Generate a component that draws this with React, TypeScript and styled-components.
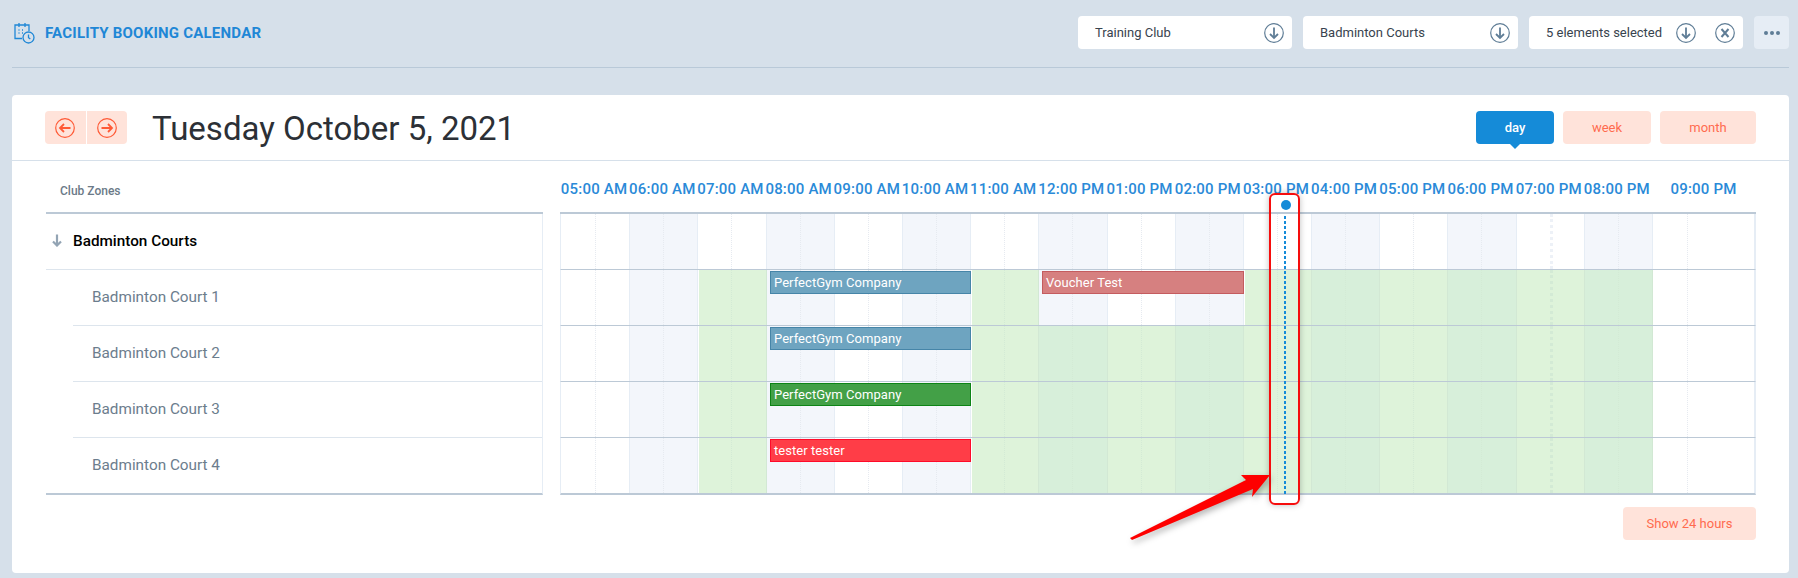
import React from "react";
import styled, { createGlobalStyle } from "styled-components";

const GlobalStyle = createGlobalStyle`
  html, body {
    margin: 0;
    padding: 0;
    background: #d6e0ea;
    font-family: Roboto, "Liberation Sans", sans-serif;
  }
  * { box-sizing: border-box; }
`;

const Page = styled.div`
  position: relative;
  width: 1798px;
  height: 578px;
  padding: 0 9px 0 12px;
  overflow: hidden;
`;

const TopHeader = styled.header`
  display: flex;
  align-items: center;
  height: 68px;
  padding: 0 0 2px 2px;
  border-bottom: 1px solid #b9c9d8;
`;

const Brand = styled.div`
  display: flex;
  align-items: center;
  gap: 10px;
  flex: 1;
  color: #1f87d6;
  font-size: 15px;
  font-weight: 700;
  letter-spacing: 0.22px;
`;

const Filters = styled.div`
  display: flex;
  gap: 11px;
`;

const Select = styled.div`
  display: flex;
  align-items: center;
  gap: 9px;
  width: ${(p: { $width: number }) => p.$width}px;
  height: 33px;
  padding: 0 8px 0 17px;
  background: #fff;
  border-radius: 4px;
  color: #38434e;
  font-size: 13px;
`;

const SelectLabel = styled.span`
  flex: 1;
  white-space: nowrap;
`;

const IconPair = styled.div`
  display: flex;
  gap: 19px;
`;

const MoreButton = styled.div`
  display: flex;
  align-items: center;
  justify-content: center;
  gap: 2px;
  width: 35px;
  height: 33px;
  background: #e6edf5;
  border-radius: 4px;
`;

const MoreDot = styled.span`
  width: 4px;
  height: 4px;
  border-radius: 50%;
  background: #5f7d96;
`;

const Card = styled.section`
  margin-top: 27px;
  height: 478px;
  background: #fff;
  border-radius: 4px;
`;

const CardTop = styled.div`
  display: flex;
  align-items: center;
  height: 66px;
  padding: 0 33px 0 33px;
  border-bottom: 1px solid #d6e0ea;
`;

const NavGroup = styled.div`
  display: flex;
  gap: 1px;
  border-radius: 4px;
  overflow: hidden;
`;

const NavButton = styled.div`
  display: flex;
  align-items: center;
  justify-content: center;
  width: 40.5px;
  height: 33px;
  background: #ffe3da;
`;

const DateTitle = styled.h1`
  flex: 1;
  margin: 0 0 0 25px;
  padding-top: 2px;
  color: #2c3036;
  font-size: 33px;
  font-weight: 400;
  white-space: nowrap;
`;

const ViewSwitch = styled.div`
  display: flex;
  gap: 9px;
`;

const ViewButton = styled.div<{ $active?: boolean; $width: number }>`
  position: relative;
  display: flex;
  align-items: center;
  justify-content: center;
  width: ${(p) => p.$width}px;
  height: 33px;
  border-radius: 4px;
  background: ${(p) => (p.$active ? "#158bd8" : "#ffe3da")};
  color: ${(p) => (p.$active ? "#fff" : "#ff6b4f")};
  font-size: 13px;
  font-weight: ${(p) => (p.$active ? 500 : 400)};

  ${(p) =>
    p.$active &&
    `&:after {
      content: "";
      position: absolute;
      left: 50%;
      bottom: -5px;
      margin-left: -5px;
      border-left: 5px solid transparent;
      border-right: 5px solid transparent;
      border-top: 5px solid #158bd8;
    }`}
`;

const CardBody = styled.div`
  display: flex;
  gap: 17px;
  padding: 0 33px 0 34px;
`;

const ZoneColumn = styled.div`
  width: 497px;
  flex: none;
`;

const ZoneHeader = styled.div`
  display: flex;
  align-items: center;
  height: 53px;
  padding: 9px 0 0 14px;
  border-bottom: 2px solid #bcc9d6;
  color: #6b7a88;
  font-size: 12px;
  font-weight: 500;
`;

const ZoneList = styled.div`
  border-right: 1px solid #e6edf5;
  border-bottom: 2px solid #bcc9d6;
`;

const GroupRow = styled.div`
  display: flex;
  align-items: center;
  height: 56px;
  padding: 0 0 2px 6px;
  gap: 11px;
  color: #000;
  font-size: 15.3px;
  font-weight: 500;
  border-bottom: 1px solid #dde5ed;
`;

const CourtRow = styled.div<{ $last?: boolean }>`
  display: flex;
  align-items: center;
  height: ${(p) => (p.$last ? 55 : 56)}px;
  margin-left: 27px;
  padding: 0 0 2px 19px;
  color: #6c7d8d;
  font-size: 15.3px;
  border-bottom: ${(p) => (p.$last ? "none" : "1px solid #dde5ed")};
`;

const Timeline = styled.div`
  position: relative;
  flex: 1;
`;

const HourGrid = styled.div`
  display: grid;
  grid-template-columns: repeat(16, 68.2px) 1fr;
`;

const HourHeader = styled(HourGrid)`
  height: 53px;
  border-bottom: 2px solid #bcc9d6;
`;

const HourLabel = styled.div`
  display: flex;
  justify-content: center;
  align-items: center;
  height: 51px;
  padding-top: 4px;
  color: #2a8ad8;
  font-size: 15px;
  font-weight: 500;
  letter-spacing: 0.2px;
  white-space: nowrap;
`;

const TimeRow = styled(HourGrid)<{ $height: number; $last?: boolean }>`
  position: relative;
  height: ${(p) => p.$height}px;
  padding-left: 1px;
  border-left: 1px solid #e6edf5;
  border-right: 1px solid #e6edf5;
  border-bottom: ${(p) => (p.$last ? "2px solid #bcc9d6" : "1px solid #bcc9d6")};
`;

const HourCell = styled.div<{ $tint: boolean; $green: boolean; $start?: boolean; $center: number; $wide?: boolean }>`
  position: relative;
  background: ${(p) =>
    p.$green ? (p.$tint ? "#d7efda" : "#def3da") : p.$tint ? "#f3f6fb" : "#fff"};
  border-right: 1px solid ${(p) => (p.$green ? "#d2e8d4" : "#e6edf5")};
  ${(p) => p.$start && "box-shadow: inset 1px 0 0 #fff;"}

  &:before {
    content: "";
    position: absolute;
    top: 0;
    bottom: 0;
    left: ${(p) => p.$center}px;
    border-left: ${(p) => (p.$wide ? 3 : 1)}px dotted
      ${(p) => (p.$green ? "#d3ead5" : p.$wide ? "#edf1f7" : "#e6eaf0")};
  }
`;

const Booking = styled.div<{ $left: number; $width: number; $bg: string; $line: string }>`
  position: absolute;
  top: 1px;
  left: ${(p) => p.$left}px;
  width: ${(p) => p.$width}px;
  height: 23px;
  padding-left: 3px;
  background: ${(p) => p.$bg};
  border: 1px solid ${(p) => p.$line};
  color: #fff;
  font-size: 13px;
  font-weight: 400;
  letter-spacing: 0.05px;
  line-height: 21px;
  z-index: 1;
`;

const NowDot = styled.div`
  position: absolute;
  top: 39px;
  left: 721px;
  width: 10px;
  height: 10px;
  border-radius: 50%;
  background: #158bd8;
  z-index: 2;
`;

const NowLine = styled.div`
  position: absolute;
  top: 55px;
  left: 724px;
  width: 2px;
  height: 278px;
  background: repeating-linear-gradient(#158bd8 0 3px, transparent 3px 5px);
  z-index: 2;
`;

const FooterRow = styled.div`
  display: flex;
  justify-content: flex-end;
  margin-top: 12px;
  padding: 0 33px;
`;

const ShowAllButton = styled.div`
  display: flex;
  align-items: center;
  justify-content: center;
  width: 133px;
  height: 33px;
  border-radius: 4px;
  background: #ffe3da;
  color: #ff6b4f;
  font-size: 13px;
`;

const Highlight = styled.div`
  position: absolute;
  left: 1269px;
  top: 193px;
  width: 31px;
  height: 312px;
  border: 2px solid #f60d0d;
  border-radius: 6px;
  box-shadow: 0 0 6px rgba(0, 0, 0, 0.25);
  z-index: 3;
`;

const ArrowOverlay = styled.svg`
  position: absolute;
  left: 1120px;
  top: 465px;
  z-index: 4;
  filter: drop-shadow(2px 3px 3px rgba(0, 0, 0, 0.3));
`;

const CircleArrow = ({ dir, color }: { dir: "left" | "right" | "down"; color: string }) => (
  <svg width="20" height="20" viewBox="0 0 20 20" fill="none">
    <circle cx="10" cy="10" r="9.3" stroke={color} strokeWidth="1.2" />
    <g
      stroke={color}
      strokeWidth="1.8"
      fill="none"
      transform={dir === "left" ? "rotate(90 10 10)" : dir === "right" ? "rotate(-90 10 10)" : undefined}
    >
      <path d="M10 4.5v10.5" />
      <path d="M6 11l4 4 4-4" />
    </g>
  </svg>
);

const CircleClose = () => (
  <svg width="20" height="20" viewBox="0 0 20 20" fill="none" stroke="#5f7d96">
    <circle cx="10" cy="10" r="9.3" strokeWidth="1.2" />
    <path d="M6.5 6l7 8M13.5 6l-7 8" strokeWidth="2" />
  </svg>
);

const BrandIcon = () => (
  <svg width="21" height="22" viewBox="0 0 21 22" fill="none" stroke="#1f87d6" strokeWidth="1.3">
    <path d="M8 16.5H1V3h14v6" />
    <path d="M5 1v4M11 1v4" />
    <path d="M4.5 8h1M8 8h1M4.5 11h1M8 11h1" strokeWidth="1.5" />
    <circle cx="14.5" cy="15.5" r="5.5" />
    <path d="M14.5 12.5v3.2l1.8 1.2" />
  </svg>
);

const SmallDown = () => (
  <svg width="10" height="13" viewBox="0 0 10 13" fill="none" stroke="#93a4b4" strokeWidth="2.2">
    <path d="M5 0.5v11M1 7.5l4 4 4-4" />
  </svg>
);

const hours = [
  "05:00 AM", "06:00 AM", "07:00 AM", "08:00 AM", "09:00 AM", "10:00 AM", "11:00 AM", "12:00 PM", "01:00 PM",
  "02:00 PM", "03:00 PM", "04:00 PM", "05:00 PM", "06:00 PM", "07:00 PM", "08:00 PM", "09:00 PM",
];

const openHours = (...idx: number[]) => hours.map((_, i) => idx.includes(i));
const evening = [6, 7, 8, 9, 10, 11, 12, 13, 14, 15];

const courts = [
  {
    name: "Badminton Court 1",
    green: openHours(2, 6, 10, 11, 12, 13, 14, 15),
    bookings: [
      { label: "PerfectGym Company", left: 209, width: 201, bg: "#6ea4c0", line: "#4685a8" },
      { label: "Voucher Test", left: 481, width: 202, bg: "#d68080", line: "#c45c5f" },
    ],
  },
  {
    name: "Badminton Court 2",
    green: openHours(2, ...evening),
    bookings: [{ label: "PerfectGym Company", left: 209, width: 201, bg: "#6ea4c0", line: "#4685a8" }],
  },
  {
    name: "Badminton Court 3",
    green: openHours(2, ...evening),
    bookings: [{ label: "PerfectGym Company", left: 209, width: 201, bg: "#43a047", line: "#0d8416" }],
  },
  {
    name: "Badminton Court 4",
    green: openHours(2, ...evening),
    bookings: [{ label: "tester tester", left: 209, width: 201, bg: "#ff3d47", line: "#ff0a2a" }],
  },
];

const Cells = ({ green }: { green?: boolean[] }) => (
  <>
    {hours.map((h, i) => (
      <HourCell
        key={h}
        $tint={i % 2 === 1}
        $green={!!green && green[i]}
        $start={!!green && green[i] && !green[i - 1]}
        $center={i === 16 ? 34 : 33}
        $wide={i === 14}
      />
    ))}
  </>
);

const App: React.FC = () => {
  return (
    <Page>
      <GlobalStyle />
      <TopHeader>
        <Brand>
          <BrandIcon />
          FACILITY BOOKING CALENDAR
        </Brand>
        <Filters>
          <Select $width={214}>
            <SelectLabel>Training Club</SelectLabel>
            <CircleArrow dir="down" color="#5f7d96" />
          </Select>
          <Select $width={215}>
            <SelectLabel>Badminton Courts</SelectLabel>
            <CircleArrow dir="down" color="#5f7d96" />
          </Select>
          <Select $width={214}>
            <SelectLabel>5 elements selected</SelectLabel>
            <IconPair>
              <CircleArrow dir="down" color="#5f7d96" />
              <CircleClose />
            </IconPair>
          </Select>
          <MoreButton>
            <MoreDot />
            <MoreDot />
            <MoreDot />
          </MoreButton>
        </Filters>
      </TopHeader>

      <Card>
        <CardTop>
          <NavGroup>
            <NavButton>
              <CircleArrow dir="left" color="#ff5a36" />
            </NavButton>
            <NavButton>
              <CircleArrow dir="right" color="#ff5a36" />
            </NavButton>
          </NavGroup>
          <DateTitle>Tuesday October 5, 2021</DateTitle>
          <ViewSwitch>
            <ViewButton $active $width={78}>day</ViewButton>
            <ViewButton $width={88}>week</ViewButton>
            <ViewButton $width={96}>month</ViewButton>
          </ViewSwitch>
        </CardTop>

        <CardBody>
          <ZoneColumn>
            <ZoneHeader>Club Zones</ZoneHeader>
            <ZoneList>
              <GroupRow>
                <SmallDown />
                Badminton Courts
              </GroupRow>
              {courts.map((c, i) => (
                <CourtRow key={c.name} $last={i === courts.length - 1}>
                  {c.name}
                </CourtRow>
              ))}
            </ZoneList>
          </ZoneColumn>

          <Timeline>
            <HourHeader>
              {hours.map((h) => (
                <HourLabel key={h}>{h}</HourLabel>
              ))}
            </HourHeader>
            <TimeRow $height={56}>
              <Cells />
            </TimeRow>
            {courts.map((c, i) => (
              <TimeRow key={c.name} $height={i === courts.length - 1 ? 57 : 56} $last={i === courts.length - 1}>
                <Cells green={c.green} />
                {c.bookings.map((b) => (
                  <Booking key={b.label + b.left} $left={b.left} $width={b.width} $bg={b.bg} $line={b.line}>
                    {b.label}
                  </Booking>
                ))}
              </TimeRow>
            ))}
            <NowDot />
            <NowLine />
          </Timeline>
        </CardBody>

        <FooterRow>
          <ShowAllButton>Show 24 hours</ShowAllButton>
        </FooterRow>
      </Card>

      <Highlight />
      <ArrowOverlay width="160" height="85" viewBox="1120 465 160 85">
        <polygon points="1130,538 1246,480 1241,475 1270,475 1252,497 1253,489 1132,540" fill="#fe0000" />
      </ArrowOverlay>
    </Page>
  );
};

export default App;
